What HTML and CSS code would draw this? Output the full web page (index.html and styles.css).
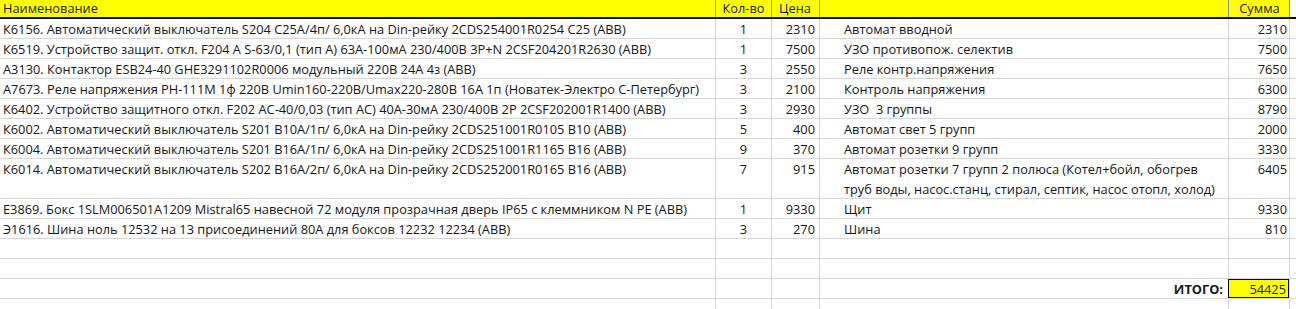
FILE: index.html
```html
<!DOCTYPE html>
<html lang="ru">
<head>
<meta charset="utf-8">
<title>Смета</title>
<link rel="stylesheet" href="styles.css">
</head>
<body>
<div class="sheet">
  <div class="row head">
    <div class="c name">Наименование</div>
    <div class="c qty">Кол-во</div>
    <div class="c price">Цена</div>
    <div class="c desc"></div>
    <div class="c sum">Сумма</div>
    <div class="c tail"></div>
  </div>
  <div class="row">
    <div class="c name">К6156. Автоматический выключатель S204 C25A/4п/ 6,0кА на Din-рейку 2CDS254001R0254 C25 (ABB)</div>
    <div class="c qty">1</div><div class="c price">2310</div>
    <div class="c desc">Автомат вводной</div><div class="c sum">2310</div><div class="c tail"></div>
  </div>
  <div class="row">
    <div class="c name">К6519. Устройство защит. откл. F204 A S-63/0,1 (тип А) 63А-100мА 230/400В 3P+N 2CSF204201R2630 (ABB)</div>
    <div class="c qty">1</div><div class="c price">7500</div>
    <div class="c desc">УЗО противопож. селектив</div><div class="c sum">7500</div><div class="c tail"></div>
  </div>
  <div class="row">
    <div class="c name">А3130. Контактор ESB24-40 GHE3291102R0006 модульный 220В 24А 4з (ABB)</div>
    <div class="c qty">3</div><div class="c price">2550</div>
    <div class="c desc">Реле контр.напряжения</div><div class="c sum">7650</div><div class="c tail"></div>
  </div>
  <div class="row">
    <div class="c name">А7673. Реле напряжения РН-111М 1ф 220В Umin160-220В/Umax220-280В 16А 1п (Новатек-Электро С-Петербург)</div>
    <div class="c qty">3</div><div class="c price">2100</div>
    <div class="c desc">Контроль напряжения</div><div class="c sum">6300</div><div class="c tail"></div>
  </div>
  <div class="row">
    <div class="c name">К6402. Устройство защитного откл. F202 AC-40/0,03 (тип АС) 40А-30мА 230/400В 2P 2CSF202001R1400 (ABB)</div>
    <div class="c qty">3</div><div class="c price">2930</div>
    <div class="c desc">УЗО&nbsp; 3 группы</div><div class="c sum">8790</div><div class="c tail"></div>
  </div>
  <div class="row">
    <div class="c name">К6002. Автоматический выключатель S201 B10A/1п/ 6,0кА на Din-рейку 2CDS251001R0105 B10 (ABB)</div>
    <div class="c qty">5</div><div class="c price">400</div>
    <div class="c desc">Автомат свет 5 групп</div><div class="c sum">2000</div><div class="c tail"></div>
  </div>
  <div class="row">
    <div class="c name">К6004. Автоматический выключатель S201 B16A/1п/ 6,0кА на Din-рейку 2CDS251001R1165 B16 (ABB)</div>
    <div class="c qty">9</div><div class="c price">370</div>
    <div class="c desc">Автомат розетки 9 групп</div><div class="c sum">3330</div><div class="c tail"></div>
  </div>
  <div class="row tall">
    <div class="c name">К6014. Автоматический выключатель S202 B16A/2п/ 6,0кА на Din-рейку 2CDS252001R0165 B16 (ABB)</div>
    <div class="c qty">7</div><div class="c price">915</div>
    <div class="c desc"><span class="line">Автомат розетки 7 групп 2 полюса (Котел+бойл, обогрев</span><span class="line">труб воды, насос.станц, стирал, септик, насос отопл, холод)</span></div><div class="c sum">6405</div><div class="c tail"></div>
  </div>
  <div class="row">
    <div class="c name">Е3869. Бокс 1SLM006501A1209 Mistral65 навесной 72 модуля прозрачная дверь IP65 с клеммником N PE (ABB)</div>
    <div class="c qty">1</div><div class="c price">9330</div>
    <div class="c desc">Щит</div><div class="c sum">9330</div><div class="c tail"></div>
  </div>
  <div class="row">
    <div class="c name">Э1616. Шина ноль 12532 на 13 присоединений 80А для боксов 12232 12234 (ABB)</div>
    <div class="c qty">3</div><div class="c price">270</div>
    <div class="c desc">Шина</div><div class="c sum">810</div><div class="c tail"></div>
  </div>
  <div class="row">
    <div class="c name"></div><div class="c qty"></div><div class="c price"></div>
    <div class="c desc"></div><div class="c sum"></div><div class="c tail"></div>
  </div>
  <div class="row">
    <div class="c name"></div><div class="c qty"></div><div class="c price"></div>
    <div class="c desc"></div><div class="c sum"></div><div class="c tail"></div>
  </div>
  <div class="row">
    <div class="c name"></div><div class="c qty"></div><div class="c price"></div>
    <div class="c desc total-label">ИТОГО:</div><div class="c sum total">54425</div><div class="c tail"></div>
  </div>
  <div class="row">
    <div class="c name"></div><div class="c qty"></div><div class="c price"></div>
    <div class="c desc"></div><div class="c sum"></div><div class="c tail"></div>
  </div>
</div>
</body>
</html>
```

FILE: styles.css
```css
* { box-sizing: border-box; }
html, body { margin: 0; padding: 0; background: #fff; }
body {
  font-family: "Open Sans", "Noto Sans", sans-serif;
  font-size: 12.8px;
  color: #161616;
}
.sheet { width: 1296px; }
.row {
  display: grid;
  grid-template-columns: 715px 56px 48px 409px 61px 7px;
  height: 20px;
  border-bottom: 1px solid #d6d6d6;
}
.row.tall { height: 40px; }
.c {
  line-height: 20px;
  white-space: nowrap;
  overflow: hidden;
  padding: 0 3px;
}
.qty, .price, .sum { border-left: 1px solid #d6d6d6; }
.tail { border-left: 1px solid #d6d6d6; }
.qty { text-align: center; }
.price { text-align: right; padding-right: 4px; }
.desc { padding-left: 24px; border-left: 1px solid #d6d6d6; }
.sum { text-align: right; padding-right: 2px; }
.line { display: block; }
.head {
  height: 19px;
  background: #ffff00;
  border-bottom: 2px solid #000;
}
.head .c { line-height: 17px; border-left-color: #8c8c8c; }
.head .price, .head .sum { text-align: center; }
.head .tail { background: #fff; }
.total-label { text-align: right; font-weight: bold; padding-right: 5px; }
.sum.total {
  background: #ffff00;
  border: 1px solid #000;
  line-height: 18px;
}
```
